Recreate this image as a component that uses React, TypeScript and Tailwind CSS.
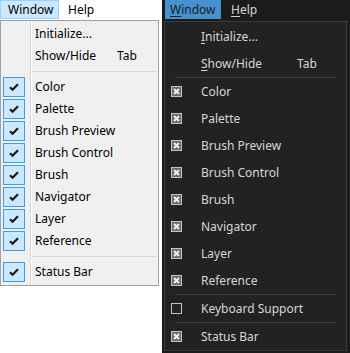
import React from 'react';

const font = { fontFamily: '"Noto Sans", "Open Sans", sans-serif' };

const lightItems = ['Color', 'Palette', 'Brush Preview', 'Brush Control', 'Brush', 'Navigator', 'Layer', 'Reference'];

const Check = () => (
  <svg width="12" height="10" viewBox="0 0 12 10">
    <path d="M2 5.2 L4.6 7.8 L10 2.2" fill="none" stroke="#1a1a1a" strokeWidth="2.2" />
  </svg>
);

const DarkBox = ({ checked }: { checked: boolean }) => (
  <svg width="11" height="11" viewBox="0 0 11 11">
    <rect x="0.5" y="0.5" width="10" height="10" fill={checked ? '#6a6a6a' : '#232323'} stroke="#c4c4c4" />
    {checked && <path d="M3 3 L8 8 M8 3 L3 8" stroke="#f0f0f0" strokeWidth="2" />}
  </svg>
);

const U = ({ c }: { c: string }) => <span className="underline underline-offset-2">{c}</span>;

const LightRow = ({ label, checked, shortcut }: { label: React.ReactNode; checked?: boolean; shortcut?: string }) => (
  <div className="flex h-[22px] items-center whitespace-nowrap">
    <div className="flex h-full w-[30px] items-center pl-[2px]">
      {checked && (
        <div className="flex h-[20px] w-[22px] items-center justify-center border border-[#3a9be6] bg-[#cce8ff]">
          <Check />
        </div>
      )}
    </div>
    <div className="w-[86px] pl-[4px]">{label}</div>
    {shortcut && <div>{shortcut}</div>}
  </div>
);

const DarkRow = ({ label, box, shortcut }: { label: React.ReactNode; box?: 'on' | 'off'; shortcut?: string }) => (
  <div className="flex h-[27px] items-center whitespace-nowrap">
    <div className="flex w-[36px] items-center pl-[6px]">{box && <DarkBox checked={box === 'on'} />}</div>
    <div className="w-[96px]">{label}</div>
    {shortcut && <div>{shortcut}</div>}
  </div>
);

export default function App() {
  return (
    <div className="flex h-[353px] w-[350px] text-[12px] leading-none" style={font}>
      {/* light theme */}
      <div className="w-[162px] bg-white text-black">
        <div className="flex h-[20px] items-start">
          <div className="flex h-[19px] w-[59px] items-center border border-[#99d1ff] bg-[#cce8ff] pl-[7px]">Window</div>
          <div className="flex h-[19px] items-center pl-[9px]">Help</div>
        </div>
        <div className="relative w-[159px] border border-[#a0a0a0] bg-[#f0f0f0] py-[2px]">
          <div className="absolute bottom-0 left-[29px] top-0 w-[2px] border-l border-[#d7d7d7] bg-white" />
          <LightRow label="Initialize..." />
          <LightRow label="Show/Hide" shortcut="Tab" />
          <div className="ml-[31px] mr-[2px] h-[9px] py-[4px]">
            <div className="h-px bg-[#d7d7d7]" />
          </div>
          {lightItems.map((l) => (
            <LightRow key={l} label={l} checked />
          ))}
          <div className="ml-[31px] mr-[2px] h-[9px] py-[4px]">
            <div className="h-px bg-[#d7d7d7]" />
          </div>
          <LightRow label="Status Bar" checked />
        </div>
      </div>

      {/* dark theme */}
      <div className="flex-1 bg-[#1b1b1b] text-[#d6d6d6]">
        <div className="flex h-[21px] items-start">
          <div className="ml-[3px] flex h-[19px] w-[56px] items-center bg-[#4592cf] pl-[5px] text-[#1b1b1b]">
            <U c="W" />indow
          </div>
          <div className="flex h-[19px] items-center pl-[10px]">
            <U c="H" />elp
          </div>
        </div>
        <div className="ml-[2px] w-[183px] border border-[#3c3c3c] bg-[#222222] pt-[1px]">
          <DarkRow label={<><U c="I" />nitialize...</>} />
          <DarkRow label={<><U c="S" />how/Hide</>} shortcut="Tab" />
          <div className="mx-[10px] h-px bg-[#3c3c3c]" />
          {lightItems.map((l) => (
            <DarkRow key={l} label={l} box="on" />
          ))}
          <div className="mx-[10px] h-px bg-[#3c3c3c]" />
          <DarkRow label="Keyboard Support" box="off" />
          <div className="mx-[10px] h-px bg-[#3c3c3c]" />
          <DarkRow label="Status Bar" box="on" />
        </div>
      </div>
    </div>
  );
}
